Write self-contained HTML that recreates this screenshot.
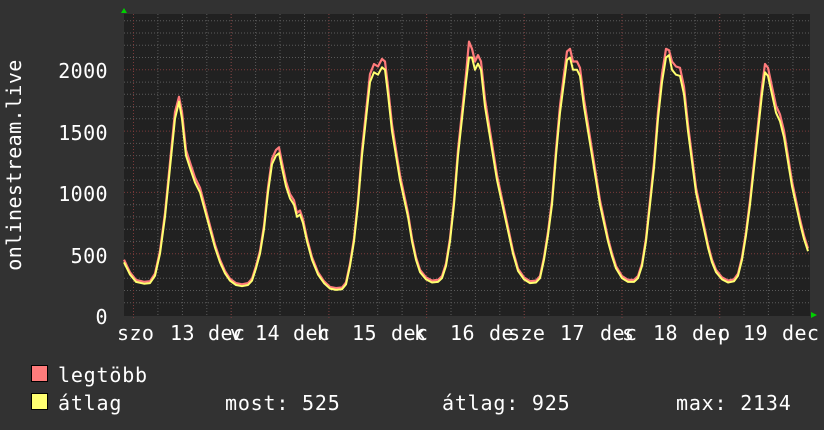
<!DOCTYPE html>
<html><head><meta charset="utf-8"><style>
html,body{margin:0;padding:0;background:#333;}
svg{display:block}
text{font-family:"DejaVu Sans Mono","Liberation Mono",monospace;font-size:20px;fill:#fff;letter-spacing:0.4px}
.lg{letter-spacing:0.8px}
</style></head><body>
<svg id="g" width="824" height="430" xmlns="http://www.w3.org/2000/svg">
<rect width="824" height="430" fill="#323232"/>
<rect x="124" y="14" width="686" height="302" fill="#212121"/>
<g id="grid"></g>
<path id="red" fill="none" stroke="#ff7b7b" stroke-width="2.2" stroke-linejoin="round"/>
<path id="yel" fill="none" stroke="#ffff70" stroke-width="2" stroke-linejoin="round"/>
<polygon points="121,13 127,13 124,8" fill="#00d000"/>
<polygon points="811,312 811,318 817,315" fill="#00d000"/>
<g text-anchor="end">
<text x="108" y="78">2000</text>
<text x="108" y="140">1500</text>
<text x="108" y="201">1000</text>
<text x="108" y="263">500</text>
<text x="108" y="324">0</text>
</g>
<text transform="translate(21,165) rotate(-90)" text-anchor="middle">onlinestream.live</text>
<g>
<text x="117" y="340">szo</text><text x="170" y="340">13</text><text x="208" y="340">dec</text><text x="230" y="340">v</text>
<text x="255" y="340">14</text><text x="293" y="340">dec</text><text x="317" y="340">h</text>
<text x="352" y="340">15</text><text x="391" y="340">dec</text><text x="414" y="340">k</text>
<text x="450" y="340">16</text><text x="489" y="340">de</text><text x="508" y="340">sze</text>
<text x="560" y="340">17</text><text x="600" y="340">dec</text><text x="622" y="340">s</text>
<text x="653" y="340">18</text><text x="692" y="340">dec</text><text x="718" y="340">p</text>
<text x="743" y="340">19</text><text x="782" y="340">dec</text>
</g>
<rect x="31.5" y="365.5" width="16" height="16" fill="#ff7b7b" stroke="#000"/>
<rect x="31.5" y="393.5" width="16" height="16" fill="#ffff70" stroke="#000"/>
<text class="lg" x="58" y="382">legtöbb</text>
<text class="lg" x="58" y="410">átlag</text>
<text class="lg" x="225" y="410">most: 525</text>
<text class="lg" x="442" y="410">átlag: 925</text>
<text class="lg" x="676" y="410">max: 2134</text>
</svg>
<script>
var grid=document.getElementById('grid'),h='';
for(var x=133.5-24.4;x<810;x+=24.42){ if(x<125)continue;
 h+='<line x1="'+x.toFixed(1)+'" y1="14" x2="'+x.toFixed(1)+'" y2="316" stroke="#5a5a5a" stroke-dasharray="1,2"/>';}
for(var v=100;v<2500;v+=100){var y=315-v*0.1226; if(y<14)continue;
 h+='<line x1="124" y1="'+y.toFixed(1)+'" x2="810" y2="'+y.toFixed(1)+'" stroke="'+(v%500?'#5a5a5a':'#7a3a3a')+'" stroke-dasharray="1,2"/>';}
for(var k=0;k<7;k++){var x=133.5+97.7*k;
 h+='<line x1="'+x.toFixed(1)+'" y1="14" x2="'+x.toFixed(1)+'" y2="320" stroke="#7a3a3a" stroke-dasharray="1,2"/>';}
grid.innerHTML=h;
var P=[[124,430],[130,330],[136,270],[144,255],[150,260],[155,320],[160,500],[165,800],[170,1200],[175,1600],[179,1740],[182,1600],[186,1300],[190,1200],[195,1080],[200,1000],[205,850],[210,700],[215,550],[220,430],[225,340],[230,280],[236,245],[242,235],[248,245],[252,280],[256,380],[260,500],[264,700],[268,1000],[272,1230],[276,1300],[279,1320],[282,1200],[286,1050],[290,950],[294,900],[297,800],[300,820],[303,750],[307,600],[312,450],[318,330],[324,260],[330,215],[336,205],[342,210],[346,250],[350,400],[354,600],[358,900],[362,1300],[366,1600],[370,1900],[374,1980],[378,1960],[382,2020],[385,2000],[388,1800],[392,1500],[396,1300],[400,1100],[404,950],[408,800],[412,600],[416,450],[420,350],[426,290],[432,265],[438,270],[442,300],[446,400],[450,600],[454,900],[458,1300],[462,1600],[466,1900],[469,2100],[472,2100],[475,2000],[478,2050],[481,2000],[485,1700],[489,1500],[493,1300],[497,1100],[501,950],[505,800],[509,650],[513,500],[518,360],[524,290],[530,260],[536,265],[540,300],[544,450],[548,650],[552,900],[556,1300],[560,1650],[564,1900],[567,2080],[570,2100],[573,2000],[577,2000],[580,1950],[584,1700],[588,1500],[592,1300],[596,1100],[600,900],[604,750],[608,600],[612,480],[616,380],[622,300],[628,270],[634,270],[638,300],[642,400],[646,600],[650,900],[654,1200],[658,1600],[662,1900],[666,2100],[669,2120],[672,2000],[676,1960],[680,1950],[684,1800],[688,1500],[692,1250],[696,1000],[700,850],[704,700],[708,550],[712,430],[716,350],[722,290],[728,265],[734,275],[738,320],[742,450],[746,650],[750,900],[754,1200],[758,1500],[762,1800],[765,1980],[768,1950],[772,1800],[776,1650],[780,1580],[784,1450],[788,1250],[792,1050],[796,900],[800,750],[804,620],[808,520]];
function path(f){var d='';for(var i=0;i<P.length;i++){var v=f(P[i]);d+=(i?'L':'M')+P[i][0]+','+(315-v*0.1226).toFixed(1);}return d;}
document.getElementById('yel').setAttribute('d',path(function(p){return p[1];}));
document.getElementById('red').setAttribute('d',path(function(p){var v=p[1]*1.03+8;if(p[0]==469)v=2230;if(p[0]==179)v=1780;if(p[0]==669)v=2160;return v;}));
</script>
</body></html>
